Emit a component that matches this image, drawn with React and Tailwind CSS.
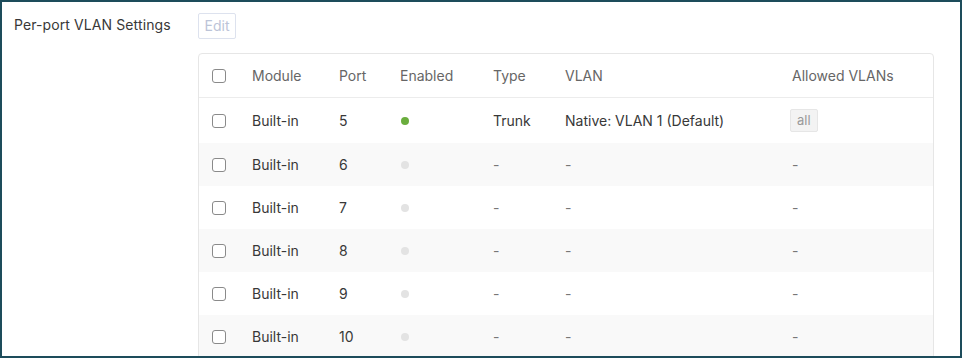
const rows = [
  { port: '5', enabled: true, type: 'Trunk', vlan: 'Native: VLAN 1 (Default)', allowed: 'all' },
  { port: '6' },
  { port: '7' },
  { port: '8' },
  { port: '9' },
  { port: '10' },
];

function Checkbox() {
  return <span className="block w-[14px] h-[14px] rounded-[3px] border border-[#8a8a8a] bg-white" />;
}

export default function App() {
  return (
    <div
      className="w-[962px] h-[358px] overflow-hidden bg-white border-2 border-[#1d4c5b] text-[14px] text-[#383838]"
      style={{ fontFamily: 'Inter, "Noto Sans", sans-serif' }}
    >
      <div className="flex pt-[11px]">
        {/* Label */}
        <div className="w-[196px] pl-[12px] pt-[2px] leading-[20px] tracking-[0.1px]">Per-port VLAN Settings</div>

        <div className="flex-1 pr-[26px]">
          <button className="h-[26px] w-[38px] border border-[#dde2ee] rounded-[2px] text-[#bcc4d8] leading-[24px]">
            Edit
          </button>

          {/* Table card */}
          <div className="mt-[14px] border border-[#e6e6e6] rounded-[4px] overflow-hidden">
            <div className="grid grid-cols-[53px_87px_61px_93px_72px_227px_1fr] h-[44px] items-center border-b border-[#ececec] text-[#666]">
              <div className="pl-[13px]"><Checkbox /></div>
              <div>Module</div>
              <div>Port</div>
              <div>Enabled</div>
              <div>Type</div>
              <div>VLAN</div>
              <div>Allowed VLANs</div>
            </div>
            {rows.map((r, i) => (
              <div
                key={r.port}
                className={`grid grid-cols-[53px_87px_61px_93px_72px_227px_1fr] items-center ${i === 0 ? 'h-[45px]' : 'h-[43px]'} ${i % 2 === 1 ? 'bg-[#f9f9f9]' : 'bg-white'}`}
              >
                <div className="pl-[13px]"><Checkbox /></div>
                <div>Built-in</div>
                <div>{r.port}</div>
                <div className="pl-[1px]">
                  <span className={`block w-[8px] h-[8px] rounded-full ${r.enabled ? 'bg-[#6aad3d]' : 'bg-[#e3e3e3]'}`} />
                </div>
                <div className={r.type ? '' : 'text-[#777]'}>{r.type || '-'}</div>
                <div className={r.vlan ? '' : 'text-[#777]'}>{r.vlan || '-'}</div>
                <div>
                  {r.allowed ? (
                    <span className="inline-block h-[23px] px-[6px] -ml-[2px] bg-[#f3f3f3] border border-[#e6e6e6] rounded-[2px] text-[13px] leading-[21px] text-[#999]">
                      {r.allowed}
                    </span>
                  ) : (
                    <span className="text-[#777]">-</span>
                  )}
                </div>
              </div>
            ))}
          </div>
        </div>
      </div>
    </div>
  );
}
